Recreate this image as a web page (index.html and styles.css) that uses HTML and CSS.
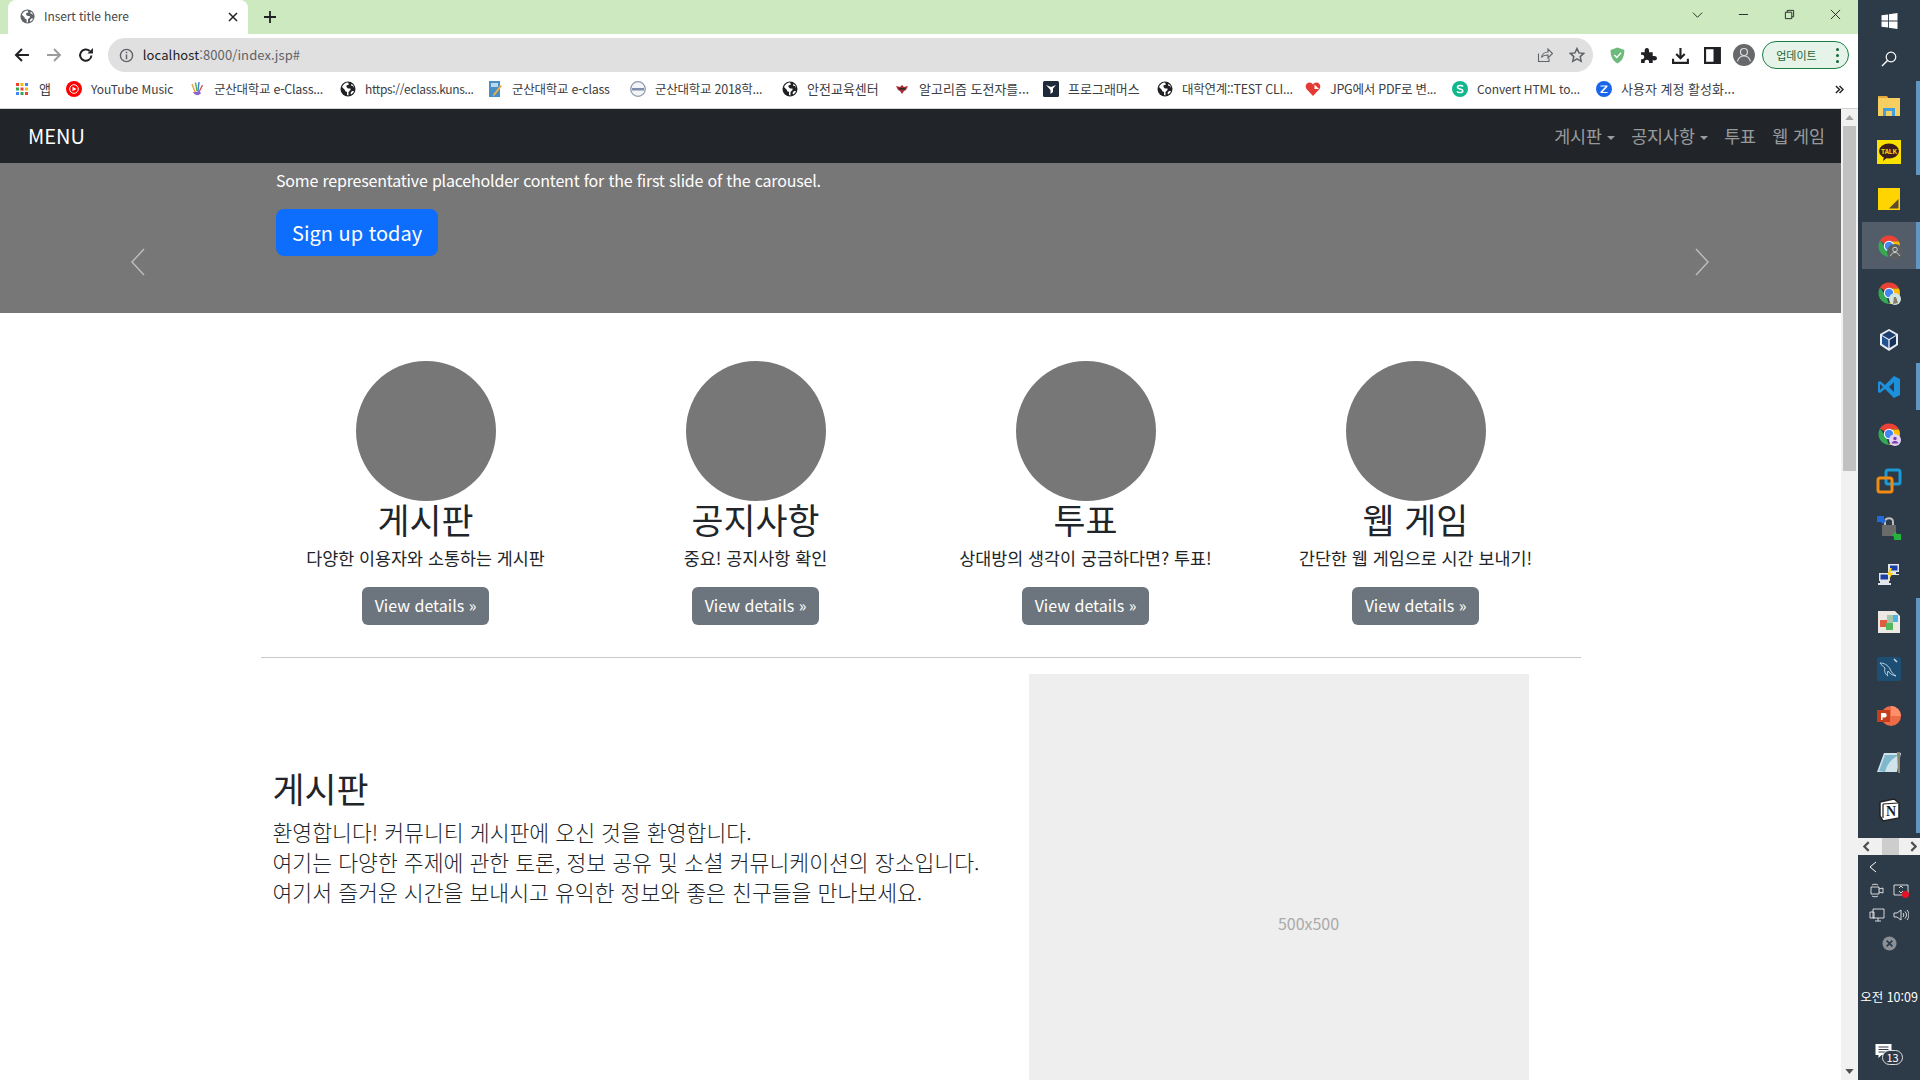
FILE: index.html
```html
<!DOCTYPE html>
<html lang="ko">
<head>
    <meta charset="UTF-8">
    <meta name="viewport" content="width=device-width, initial-scale=1.0">
    <title>Insert title here</title>
    <link rel="stylesheet" href="styles.css">
</head>
<body>
    <svg class="defs" width="0" height="0">
        <symbol id="globe" viewBox="0 0 16 16">
            <circle cx="8" cy="8" r="7.5" fill="currentColor"/>
            <path d="M2 6l3 3v1l2 1v3l1.5.5V11l2-2V7.500H8L6.500 6V4.500L9 3.500 8 1.500C5.500 1.500 3 3.500 2 6zM11 3l.5 2H13l1 2c0-2-1-3.500-3-4zM12 10l-1.500 2 .5 1.500c1.500-1 2.500-2 3-3.500z" fill="#fff"/>
        </symbol>
        <symbol id="chrome" viewBox="0 0 24 24">
            <path d="M12 12L2.900 6.500A11 11 0 0 1 22 7.500H12z" fill="#ea4335"/>
            <path d="M12 23A11 11 0 0 1 2.900 6.500L9 15z" fill="#34a853"/>
            <path d="M12 7.500h10A11 11 0 0 1 12 23l4-8z" fill="#fbbc04"/>
            <circle cx="12" cy="12" r="5.200" fill="#fff"/>
            <circle cx="12" cy="12" r="4.200" fill="#4285f4"/>
        </symbol>
    </svg>
    <div class="screen">
        <div class="window">
            <div class="tabstrip">
                <div class="tab">
                    <svg class="tab-icon"><use href="#globe"/></svg>
                    <span class="tab-title">Insert title here</span>
                    <svg class="tab-close" viewBox="0 0 10 10"><path d="M1 1l8 8M9 1l-8 8" stroke="#202124" stroke-width="1.500"/></svg>
                </div>
                <svg class="new-tab" viewBox="0 0 12 12"><path d="M6 0v12M0 6h12" stroke="#202124" stroke-width="1.800"/></svg>
                <div class="window-btns">
                    <svg viewBox="0 0 12 12"><path d="M1 4l5 5 5-5" fill="none" stroke="#222" stroke-width="1"/></svg>
                    <svg viewBox="0 0 12 12"><path d="M1 6h10" stroke="#222" stroke-width="1"/></svg>
                    <svg viewBox="0 0 12 12"><path d="M1.500 3.500h7v7h-7zM3.500 3.500v-2h7v7h-2" fill="none" stroke="#222" stroke-width="1"/></svg>
                    <svg viewBox="0 0 12 12"><path d="M1 1l10 10M11 1L1 11" stroke="#222" stroke-width="1"/></svg>
                </div>
            </div>
            <div class="toolbar">
                <svg class="nav-icon" viewBox="0 0 16 16"><path d="M15 8H2M8 2L2 8l6 6" fill="none" stroke="#202124" stroke-width="2"/></svg>
                <svg class="nav-icon" viewBox="0 0 16 16"><path d="M1 8h13M8 2l6 6-6 6" fill="none" stroke="#9a9c9e" stroke-width="2"/></svg>
                <svg class="nav-icon" viewBox="0 0 16 16"><path d="M13.500 8.500A5.700 5.700 0 1 1 11.800 4" fill="none" stroke="#202124" stroke-width="2"/><path d="M9.500 6.500H15V1z" fill="#202124"/></svg>
                <div class="omnibox">
                    <svg class="info-icon" viewBox="0 0 16 16"><circle cx="8" cy="8" r="6.500" fill="none" stroke="#5f6368" stroke-width="1.500"/><path d="M8 7v5M8 4v1.600" stroke="#5f6368" stroke-width="1.600"/></svg>
                    <span class="url">localhost<span class="url-dim">:8000/index.jsp#</span></span>
                    <svg class="omni-icon" viewBox="0 0 16 16"><path d="M1.500 6.500v8h10.500v-3M4.500 10.500C5 7 8 5 11 5V2l4.500 4.500L11 11V8C8.500 8 6 8.500 4.500 10.500z" fill="none" stroke="#5f6368" stroke-width="1.100"/></svg>
                    <svg class="omni-icon" viewBox="0 0 16 16"><path d="M8 1.500l2 4.400 4.700.5-3.500 3.200 1 4.700L8 11.900l-4.200 2.400 1-4.700-3.500-3.200 4.700-.5z" fill="none" stroke="#5f6368" stroke-width="1.500"/></svg>
                </div>
                <svg class="ext-icon" viewBox="0 0 16 16"><path d="M8 .5l6.500 2.300c0 5.500-1.500 10-6.500 12.700C3 12.800 1.500 8.300 1.500 2.800z" fill="#6cbb7d"/><path d="M5 7.500l2.300 2.300L11.500 5.500" fill="none" stroke="#fff" stroke-width="1.300"/></svg>
                <svg class="ext-icon" viewBox="0 0 16 16"><path d="M1 5h3.500C4 2 5 1 6.500 1S9 2.500 8.500 5H12v3.500c3-.5 4 .5 4 2s-1 2.500-4 2V15H8.500c.5-2-.5-3-2-3s-2.500 1-2 3H1v-3.500c2 .5 3-.5 3-2s-1-2.500-3-2z" fill="#202124"/></svg>
                <svg class="ext-icon" viewBox="0 0 16 16"><path d="M8 1v9M4 6.500l4 4 4-4M1 11v4h14v-4" fill="none" stroke="#202124" stroke-width="2"/></svg>
                <svg class="ext-icon" viewBox="0 0 16 16"><path d="M1 1h14v14H1z" fill="none" stroke="#202124" stroke-width="2"/><path d="M9 1h6v14H9z" fill="#202124"/></svg>
                <svg class="avatar" viewBox="0 0 22 22"><circle cx="11" cy="11" r="11" fill="#66686b"/><circle cx="11" cy="8" r="3.500" fill="none" stroke="#ddd" stroke-width="1.200"/><path d="M4.500 17.500c1-4 3-5.500 6.500-5.500s5.500 1.500 6.500 5.500" fill="none" stroke="#ddd" stroke-width="1.200"/></svg>
                <div class="update-pill">
                    <span class="update-text">업데이트</span>
                    <span class="update-dots"><i></i><i></i><i></i></span>
                </div>
            </div>
            <div class="bookmarks">
                <div class="bookmark bm-ko">
                    <svg class="bm-icon" viewBox="0 0 16 16">
                        <path d="M2 2h3v3H2z" fill="#ea4335"/><path d="M6.500 2h3v3h-3z" fill="#fbbc04"/><path d="M11 2h3v3h-3z" fill="#4285f4"/>
                        <path d="M2 6.500h3v3H2z" fill="#34a853"/><path d="M6.500 6.500h3v3h-3z" fill="#ea4335"/><path d="M11 6.500h3v3h-3z" fill="#fbbc04"/>
                        <path d="M2 11h3v3H2z" fill="#4285f4"/><path d="M6.500 11h3v3h-3z" fill="#34a853"/><path d="M11 11h3v3h-3z" fill="#ea4335"/>
                    </svg>
                    <span>앱</span>
                </div>
                <div class="bookmark">
                    <svg class="bm-icon" viewBox="0 0 16 16"><circle cx="8" cy="8" r="8" fill="#f00"/><circle cx="8" cy="8" r="4.300" fill="none" stroke="#fff"/><path d="M6.500 5.800L10.500 8l-4 2.200z" fill="#fff"/></svg>
                    <span>YouTube Music</span>
                </div>
                <div class="bookmark bm-mix">
                    <svg class="bm-icon" viewBox="0 0 16 16"><path d="M3 3l3 8" stroke="#e8a33a" stroke-width="1.400"/><path d="M6.500 1.500L8 10" stroke="#4caf50" stroke-width="1.400"/><path d="M10 1l-1 9" stroke="#3f7fd6" stroke-width="1.400"/><path d="M13.500 4L10 11" stroke="#d9534f" stroke-width="1.400"/><path d="M4 11c2 4 6 4 8 1l-2-2-4 1z" fill="#8a63d2"/></svg>
                    <span>군산대학교 e-Class...</span>
                </div>
                <div class="bookmark bm-url">
                    <svg class="bm-icon bm-globe"><use href="#globe"/></svg>
                    <span>https://eclass.kuns...</span>
                </div>
                <div class="bookmark bm-mix">
                    <svg class="bm-icon" viewBox="0 0 16 16"><path d="M2 0h11v16H2z" fill="#4a90c8"/><path d="M4 2h7v4H4z" fill="#bcd9ee"/><path d="M15 5L8 14l-2 1.500.5-2.500 7-9z" fill="#f2b33d"/></svg>
                    <span>군산대학교 e-class</span>
                </div>
                <div class="bookmark bm-mix">
                    <svg class="bm-icon" viewBox="0 0 16 16"><circle cx="8" cy="8" r="7.300" fill="#f2f4f8" stroke="#8d99ad" stroke-width="1.300"/><path d="M2 7h12v2.500H2z" fill="#7f8cab"/></svg>
                    <span>군산대학교 2018학...</span>
                </div>
                <div class="bookmark bm-ko">
                    <svg class="bm-icon bm-globe"><use href="#globe"/></svg>
                    <span>안전교육센터</span>
                </div>
                <div class="bookmark bm-ko">
                    <svg class="bm-icon" viewBox="0 0 16 16"><path d="M2 5l4 1 2-2 2 2 4-1-2 4-2 1-2 3-2-3-2-1z" fill="#a32c32"/><path d="M5 7h6v1.500H5z" fill="#2a2a2a"/></svg>
                    <span>알고리즘 도전자를...</span>
                </div>
                <div class="bookmark bm-ko">
                    <svg class="bm-icon" viewBox="0 0 16 16"><rect width="16" height="16" rx="1.500" fill="#1e2a3a"/><path d="M3 4l5 2 5-2-3 3.500V11l-2.500 2V9z" fill="#fff"/></svg>
                    <span>프로그래머스</span>
                </div>
                <div class="bookmark bm-mix">
                    <svg class="bm-icon bm-globe"><use href="#globe"/></svg>
                    <span>대학연계::TEST CLI...</span>
                </div>
                <div class="bookmark bm-mix">
                    <svg class="bm-icon" viewBox="0 0 16 16"><path d="M8 15L1.500 8C-.5 5 1.500 1.500 4.500 1.500 6 1.500 7.300 2.300 8 3.500 8.700 2.300 10 1.500 11.500 1.500c3 0 5 3.500 3 6.500z" fill="#e53935"/><path d="M9.500 3.500L14 8H9.500z" fill="#fff"/></svg>
                    <span>JPG에서 PDF로 변...</span>
                </div>
                <div class="bookmark">
                    <svg class="bm-icon" viewBox="0 0 16 16"><circle cx="8" cy="8" r="8" fill="#10b68c"/><path d="M11 5.500C10 4 5.500 4 5.500 6.300 5.500 8.500 10.800 7.500 10.800 10 10.800 12 6 12 5 10.300" fill="none" stroke="#fff" stroke-width="1.600"/></svg>
                    <span>Convert HTML to...</span>
                </div>
                <div class="bookmark bm-ko">
                    <svg class="bm-icon" viewBox="0 0 16 16"><circle cx="8" cy="8" r="8" fill="#1a66e8"/><path d="M4.500 4.500h7v1.300L6.500 11h5v1h-7v-1.300l5-5.200h-5z" fill="#fff"/></svg>
                    <span>사용자 계정 활성화...</span>
                </div>
                <svg class="bm-more" viewBox="0 0 10 10"><path d="M1 1l4 4-4 4M5 1l4 4-4 4" fill="none" stroke="#202124" stroke-width="1.600"/></svg>
            </div>
            <div class="viewport">
                <div class="page">
                    <nav class="navbar">
                        <a class="brand">MENU</a>
                        <ul class="nav-links">
                            <li class="nav-caret">게시판</li>
                            <li class="nav-caret">공지사항</li>
                            <li>투표</li>
                            <li>웹 게임</li>
                        </ul>
                    </nav>
                    <section class="carousel">
                        <div class="caption">
                            <p>Some representative placeholder content for the first slide of the carousel.</p>
                            <a class="btn btn-lg">Sign up today</a>
                        </div>
                        <svg class="carousel-arrow arrow-prev" viewBox="0 0 16 32"><path d="M14 3L2 16l12 13" fill="none" stroke="#fff" stroke-width="1.500"/></svg>
                        <svg class="carousel-arrow arrow-next" viewBox="0 0 16 32"><path d="M2 3l12 13L2 29" fill="none" stroke="#fff" stroke-width="1.500"/></svg>
                    </section>
                    <main class="container">
                        <div class="marketing">
                            <div class="col">
                                <div class="circle"></div>
                                <h2>게시판</h2>
                                <p>다양한 이용자와 소통하는 게시판</p>
                                <a class="btn btn-details">View details »</a>
                            </div>
                            <div class="col">
                                <div class="circle"></div>
                                <h2>공지사항</h2>
                                <p>중요! 공지사항 확인</p>
                                <a class="btn btn-details">View details »</a>
                            </div>
                            <div class="col">
                                <div class="circle"></div>
                                <h2>투표</h2>
                                <p>상대방의 생각이 궁금하다면? 투표!</p>
                                <a class="btn btn-details">View details »</a>
                            </div>
                            <div class="col">
                                <div class="circle"></div>
                                <h2>웹 게임</h2>
                                <p>간단한 웹 게임으로 시간 보내기!</p>
                                <a class="btn btn-details">View details »</a>
                            </div>
                        </div>
                        <hr class="divider">
                        <div class="featurette">
                            <div class="feature-text">
                                <h2>게시판</h2>
                                <p class="lead">환영합니다! 커뮤니티 게시판에 오신 것을 환영합니다.<br>여기는 다양한 주제에 관한 토론, 정보 공유 및 소셜 커뮤니케이션의 장소입니다.<br>여기서 즐거운 시간을 보내시고 유익한 정보와 좋은 친구들을 만나보세요.</p>
                            </div>
                            <div class="placeholder">500x500</div>
                        </div>
                    </main>
                </div>
                <div class="scrollbar">
                    <svg class="scroll-arrow" viewBox="0 0 10 6"><path d="M5 0l5 6H0z" fill="#a3a3a3"/></svg>
                    <div class="scroll-thumb"></div>
                    <svg class="scroll-arrow scroll-arrow-down" viewBox="0 0 10 6"><path d="M5 6L0 0h10z" fill="#505050"/></svg>
                </div>
            </div>
        </div>
        <aside class="taskbar">
            <svg class="win-logo" viewBox="0 0 16 16"><path d="M0 2.300l6.500-.9v6.200H0zM7.400 1.300L16 0v7.600H7.400zM0 8.400h6.500v6.200L0 13.700zM7.400 8.400H16V16l-8.600-1.300z" fill="#fff"/></svg>
            <svg class="search-logo" viewBox="0 0 16 16"><circle cx="10" cy="6" r="4.800" fill="none" stroke="#fff" stroke-width="1.200"/><path d="M6.500 9.500L1 15" stroke="#fff" stroke-width="1.400"/></svg>
            <div class="task-icons">
                <div class="task open"><svg viewBox="0 0 24 24"><path d="M1 3h9l2 3H1z" fill="#e8a73a"/><path d="M1 5h22v18H1z" fill="#f6cf60"/><path d="M6 15h12v8h-3v-5H9v5H6z" fill="#3f9de0"/></svg></div>
                <div class="task open"><svg viewBox="0 0 24 24"><path d="M0 0h24v24H0z" fill="#fae100"/><ellipse cx="12" cy="11" rx="10" ry="7.500" fill="#3c1e1e"/><path d="M7 16l-1 5 5-4z" fill="#3c1e1e"/><text x="12" y="13.500" class="talk-label">TALK</text></svg></div>
                <div class="task"><svg viewBox="0 0 24 24"><path d="M1 1h22v22H1z" fill="#ffd400"/><path d="M21.500 12v9.500H12z" fill="#5a4c30"/></svg></div>
                <div class="task open task-active"><svg viewBox="0 0 24 24"><use href="#chrome"/><circle cx="18" cy="18" r="8" fill="#5c5f62"/><circle cx="18" cy="15.500" r="2.300" fill="none" stroke="#ddd" stroke-width=".9"/><path d="M13.500 22c.8-2.500 2.500-3.500 4.500-3.500s3.700 1 4.500 3.500" fill="none" stroke="#ddd" stroke-width=".9"/></svg></div>
                <div class="task"><svg viewBox="0 0 24 24"><use href="#chrome"/><circle cx="18" cy="18" r="6" fill="#cfe5e0"/><path d="M16 23l1-7 2 0 2 6z" fill="#8a7a68"/></svg></div>
                <div class="task"><svg viewBox="0 0 24 24"><path d="M12 1l9 5v11l-9 6-9-6V6z" fill="#e8edf2"/><path d="M12 3l7 4-7 4-7-4z" fill="#1c3f70"/><path d="M5 8l6.300 4v8L5 16z" fill="#24528f"/><path d="M19 8l-6.300 4v8l6.300-4z" fill="#16325c"/></svg></div>
                <div class="task open"><svg viewBox="0 0 24 24"><path d="M17 1l6 3v16l-6 3-9-9-5 4-2-1V7l2-1 5 4z" fill="#1d8fdb"/><path d="M17 7l-5 5 5 5z" fill="#2d3a48"/><path d="M3 9v6l3-3z" fill="#2d3a48"/></svg></div>
                <div class="task"><svg viewBox="0 0 24 24"><use href="#chrome"/><circle cx="18" cy="18" r="6" fill="#e3d4f3"/><circle cx="18" cy="16.500" r="1.700" fill="#7b3fb0"/><path d="M14.500 21.500c.7-2 2-2.500 3.500-2.500s2.800.5 3.500 2.500z" fill="#7b3fb0"/></svg></div>
                <div class="task"><svg viewBox="0 0 24 24"><rect x="9" y="1" width="14" height="14" rx="2" fill="none" stroke="#1b9ad6" stroke-width="3"/><rect x="1" y="9" width="14" height="14" rx="2" fill="none" stroke="#f08a11" stroke-width="3"/></svg></div>
                <div class="task"><svg viewBox="0 0 24 24"><path d="M8 10V6c0-5 8-5 8 0v4" fill="none" stroke="#bdbdbd" stroke-width="2"/><path d="M5 9h14v11H5z" fill="#6a6a6a"/><path d="M0 0h7v3l2 2-3 3-2-2-4 0z" fill="#2168d8"/><path d="M24 24h-7v-3l-2-2 3-3 2 2h4z" fill="#25b33e"/></svg></div>
                <div class="task"><svg viewBox="0 0 24 24"><path d="M11 1h11v8h-3v2h3v1H13V9h-2z" fill="#e2e6ea"/><path d="M13 2.500h7.500v5H13z" fill="#1a3fa8"/><path d="M2 10h11v8h-1v2h2v2H1v-2h2v-2H2z" fill="#e2e6ea"/><path d="M3.500 11.500H11v5H3.500z" fill="#1a3fa8"/><path d="M13 5l-3 7h3l-2 6 5-8h-3l2-5z" fill="#ffd400"/></svg></div>
                <div class="task open"><svg viewBox="0 0 24 24"><path d="M1 1h17l5 5v17H1z" fill="#ece9e4"/><path d="M3 10h7v7H3z" fill="#e55b41"/><path d="M10 5h6v8h-6z" fill="#a5c6a8"/><path d="M16 5h5v7h-5z" fill="#4db0e6"/><path d="M9 13h7v7H9z" fill="#52b95a"/></svg></div>
                <div class="task open"><svg viewBox="0 0 24 24"><rect width="24" height="24" rx="2" fill="#1d4e74"/><path d="M3 6c4 0 8 2 10 6 1 3 3 5 6 7-4-1-6-2-8-5-1 3-1 4 0 5-3-2-4-5-3-8-2-2-4-3-5-5z" fill="none" stroke="#c7dcea" stroke-width=".9"/><path d="M17 2l3 3" stroke="#c7dcea" stroke-width="1.500"/></svg></div>
                <div class="task open"><svg viewBox="0 0 24 24"><circle cx="14" cy="12" r="10" fill="#ed6c47"/><path d="M14 2a10 10 0 0 1 10 10H14z" fill="#ff8f6b"/><path d="M0 6h13v12H0z" fill="#c43e1c"/><path d="M4 9h3.500a2.200 2.200 0 0 1 0 4.500H5.500V16H4z" fill="#fff"/></svg></div>
                <div class="task open"><svg viewBox="0 0 24 24"><path d="M7 2h17l-4 19-20 0z" fill="#cfe3ea"/><path d="M2 20L8 4l14 0c-7 3-12 9-14 17z" fill="#7fb7cc"/><path d="M20 1h3v21h-2z" fill="#8c8571"/></svg></div>
                <div class="task open"><svg viewBox="0 0 24 24"><path d="M3 4l14-3 5 4v15l-16 3-3-5z" fill="#fff" stroke="#222" stroke-width="1.500"/><path d="M6 6l15-1M6 6v14" stroke="#222" stroke-width="1.200"/><text x="14" y="18" class="notion-label">N</text></svg></div>
            </div>
            <div class="task-scroll">
                <svg viewBox="0 0 6 10"><path d="M5 1L1 5l4 4" fill="none" stroke="#505050" stroke-width="2"/></svg>
                <span class="task-thumb"></span>
                <svg viewBox="0 0 6 10"><path d="M1 1l4 4-4 4" fill="none" stroke="#505050" stroke-width="2"/></svg>
            </div>
            <div class="tray">
                <svg class="tray-chevron" viewBox="0 0 8 12"><path d="M7 1L1 6l6 5" fill="none" stroke="#fff" stroke-width="1"/></svg>
                <div class="tray-row">
                    <svg viewBox="0 0 16 16"><path d="M2 5h8v7H2zM10 7l4-1v5l-4-1M3 3c1-1 5-1 6 0M3 14c1 1 5 1 6 0" fill="none" stroke="#fff" stroke-width=".8"/></svg>
                    <svg viewBox="0 0 16 16"><path d="M1 3h14v10H1z" fill="none" stroke="#fff" stroke-width=".8"/><path d="M6 6l2-2 2 2M10 9l-2 2-2-2" fill="none" stroke="#fff" stroke-width=".8"/><circle cx="12.500" cy="12.500" r="3.500" fill="#e81123"/></svg>
                </div>
                <div class="tray-row">
                    <svg viewBox="0 0 16 16"><path d="M4 2h11v9H4zM1 5h4v6H1zM9 11v3M6 14h6" fill="none" stroke="#fff" stroke-width=".8"/></svg>
                    <svg viewBox="0 0 16 16"><path d="M1 6h3l4-3v10l-4-3H1zM10 6c1 1 1 3 0 4M12 4.500c2 2 2 5 0 7M14 3c2.500 3 2.500 7 0 10" fill="none" stroke="#fff" stroke-width=".8"/></svg>
                </div>
                <svg class="tray-x" viewBox="0 0 16 16"><circle cx="8" cy="8" r="7.500" fill="#8b9096"/><path d="M5 5l6 6M11 5l-6 6" stroke="#2d3a48" stroke-width="1.800"/></svg>
                <div class="clock">오전 10:09</div>
                <div class="notify">
                    <svg viewBox="0 0 16 14"><path d="M0 0h16v11H6l-3 3v-3H0z" fill="#fff"/><path d="M3 3h10M3 5.500h10M3 8h7" stroke="#2d3a48"/></svg>
                    <span class="notify-badge">13</span>
                </div>
            </div>
        </aside>
    </div>
</body>
</html>
```

FILE: styles.css
```css
* {
    box-sizing: border-box;
}
html, body {
    margin: 0;
    height: 100%;
    overflow: hidden;
}
body {
    font-family: "Noto Sans CJK KR", sans-serif;
    font-size: 16px;
    line-height: 1.5;
    color: #212529;
    background-color: #fff;
}
.defs {
    position: absolute;
}
.screen {
    display: flex;
    height: 1080px;
}
.window {
    flex: 1;
    min-width: 0;
    display: flex;
    flex-direction: column;
}

/* browser chrome */
.tabstrip {
    height: 34px;
    flex: none;
    background-color: #cce9c0;
    display: flex;
    align-items: flex-end;
    padding-left: 8px;
}
.tab {
    width: 240px;
    height: 34px;
    background-color: #fff;
    border-radius: 8px 8px 0 0;
    display: flex;
    align-items: center;
    padding: 0 10px 1px 12px;
    color: #45484c;
}
.tab-icon {
    width: 15px;
    height: 15px;
    color: #5f6368;
    margin-right: 9px;
}
.tab-title {
    flex: 1;
    font-size: 12px;
    letter-spacing: -.1px;
    padding-bottom: 1px;
}
.tab-close {
    width: 10px;
    height: 10px;
}
.new-tab {
    width: 12px;
    height: 12px;
    margin: 0 0 11px 16px;
}
.window-btns {
    margin-left: auto;
    height: 34px;
    display: flex;
    align-items: center;
    gap: 35px;
    padding: 0 17px 5px 0;
}
.window-btns svg {
    width: 11px;
    height: 11px;
}
.toolbar {
    height: 42px;
    flex: none;
    display: flex;
    align-items: center;
    padding: 4px 9px 4px 14px;
    background-color: #fff;
}
.nav-icon {
    width: 16px;
    height: 16px;
    margin-right: 16px;
}
.omnibox {
    width: 1490px;
    height: 34px;
    margin-left: -2px;
    border-radius: 17px;
    background-color: #e0e0e0;
    display: flex;
    align-items: center;
    padding: 0 8px 0 11px;
}
.info-icon {
    width: 15px;
    height: 15px;
    margin-right: 9px;
}
.url {
    flex: 1;
    font-size: 13px;
    letter-spacing: .1px;
    color: #202124;
}
.url-dim {
    color: #5f6368;
}
.omni-icon {
    width: 16px;
    height: 16px;
    margin-left: 16px;
}
.ext-icon {
    width: 17px;
    height: 17px;
    margin-left: 15px;
}
.omnibox + .ext-icon {
    margin-left: 16px;
}
.avatar {
    width: 22px;
    height: 22px;
    margin-left: 12px;
}
.update-pill {
    width: 87px;
    height: 28px;
    margin-left: 7px;
    border: 1px solid #1a7f42;
    border-radius: 14px;
    background-color: #e6f3e9;
    display: flex;
    align-items: center;
    padding: 0 9px 0 13px;
}
.update-text {
    flex: 1;
    font-size: 11px;
    color: #18663a;
}
.update-dots {
    display: flex;
    flex-direction: column;
    gap: 3px;
}
.update-dots i {
    width: 3px;
    height: 3px;
    border-radius: 50%;
    background-color: #18663a;
}
.bookmarks {
    height: 33px;
    flex: none;
    display: grid;
    grid-template-columns: 52px 123px 151px 147px 143px 152px 112px 149px 114px 148px 147px 144px 239px 14px;
    align-items: center;
    padding: 0 0 6px 14px;
    background-color: #fff;
    border-bottom: 1px solid #d3d3d3;
    font-size: 12px;
    letter-spacing: -.1px;
    color: #3c4043;
}
.bm-ko {
    font-size: 13px;
    letter-spacing: 0;
}
.bm-mix {
    font-size: 12.500px;
    letter-spacing: -.25px;
}
.bm-url {
    letter-spacing: -.35px;
}
.bookmark {
    display: flex;
    align-items: center;
    gap: 9px;
    white-space: nowrap;
}
.bm-icon {
    width: 16px;
    height: 16px;
    flex: none;
}
.bm-globe {
    color: #202124;
}
.bm-more {
    width: 9px;
    height: 9px;
}

/* page */
.viewport {
    flex: 1;
    min-height: 0;
    display: flex;
}
.page {
    flex: 1;
    min-width: 0;
    overflow: hidden;
}
.navbar {
    height: 54px;
    background-color: #212529;
    display: flex;
    align-items: center;
    justify-content: space-between;
    padding: 0 16px 0 28px;
}
.brand {
    font-size: 20px;
    color: #fff;
}
.nav-links {
    display: flex;
    gap: 16px;
    margin: 0;
    padding: 0;
    list-style: none;
    font-size: 17.400px;
    color: rgba(255,255,255,.55);
}
.nav-caret::after {
    content: "";
    display: inline-block;
    margin-left: 5px;
    vertical-align: 3px;
    border-top: 4px solid;
    border-left: 4px solid transparent;
    border-right: 4px solid transparent;
}
.carousel {
    position: relative;
    height: 150px;
    background-color: #777;
    color: #fff;
}
.caption {
    width: 1320px;
    margin: 0 auto;
    padding: 5px 0 0 15.500px;
}
.caption p {
    margin: 0 0 17px;
    letter-spacing: -.19px;
}
.carousel-arrow {
    position: absolute;
    top: 83px;
    width: 16px;
    height: 32px;
    opacity: .5;
}
.arrow-prev {
    left: 130px;
}
.arrow-next {
    right: 131px;
}
.btn {
    display: inline-block;
    color: #fff;
    text-align: center;
}
.btn-lg {
    padding: 8.500px 16px;
    font-size: 20px;
    line-height: 30px;
    border-radius: 8px;
    background-color: #0d6efd;
}
.btn-details {
    padding: 7px 13px 7px;
    line-height: 23px;
    height: 38px;
    border-radius: 6px;
    background-color: #6c757d;
}
.container {
    width: 1320px;
    margin: 0 auto;
}
.marketing {
    display: grid;
    grid-template-columns: repeat(4, 1fr);
    padding-top: 48px;
}
.col {
    display: flex;
    flex-direction: column;
    align-items: center;
    padding: 0 12px;
    text-align: center;
}
.circle {
    width: 140px;
    height: 140px;
    border-radius: 50%;
    background-color: #777;
}
h2 {
    margin: 0 0 8px;
    font-size: 34.800px;
    font-weight: 400;
    line-height: 38.400px;
}
.col h2 {
    margin: -1px 0 8px;
}
.col p {
    margin: 0 0 17px;
    font-size: 17.400px;
    line-height: 24px;
}
.divider {
    margin: 32px 0 16px;
    border: 0;
    border-top: 1px solid #c8c9ca;
}
.featurette {
    display: flex;
    padding-left: 12px;
}
.feature-text {
    width: 756px;
    padding-top: 95px;
}
.feature-text h2 {
    margin-bottom: 9px;
}
.lead {
    margin: 0;
    font-size: 21.600px;
    font-weight: 300;
    line-height: 30px;
}
.placeholder {
    width: 500px;
    height: 500px;
    flex: none;
    background-color: #eee;
    color: #aaa;
    display: flex;
    align-items: center;
    justify-content: center;
    padding: 0 0 2px 60px;
}
.scrollbar {
    width: 17px;
    flex: none;
    background-color: #f1f1f1;
    display: flex;
    flex-direction: column;
    align-items: center;
}
.scroll-arrow {
    width: 9px;
    height: 5px;
    margin: 6px 0;
    flex: none;
}
.scroll-thumb {
    width: 13px;
    height: 345px;
    background-color: #c1c1c1;
}
.scroll-arrow-down {
    margin-top: auto;
}

/* taskbar */
.taskbar {
    width: 62px;
    flex: none;
    background-color: #2d3a48;
    display: flex;
    flex-direction: column;
    align-items: center;
    color: #fff;
}
.win-logo {
    width: 17px;
    height: 16px;
    margin-top: 13px;
}
.search-logo {
    width: 16px;
    height: 16px;
    margin: 22px 0 0;
}
.task-icons {
    width: 100%;
    margin-top: 14px;
    display: flex;
    flex-direction: column;
}
.task {
    height: 47px;
    display: flex;
    align-items: center;
    justify-content: center;
    padding-left: 0;
}
.task svg {
    width: 24px;
    height: 24px;
    overflow: visible;
}
.task.open {
    border-right: 4px solid #5f96c4;
    padding-left: 4px;
}
.task-active {
    background-color: #525d69;
    margin-left: 4px;
}
.task.task-active {
    padding-left: 0;
}
.talk-label {
    font-size: 6.500px;
    font-weight: 700;
    fill: #fae100;
    text-anchor: middle;
}
.notion-label {
    font-family: "Liberation Serif", serif;
    font-size: 14px;
    font-weight: 700;
    fill: #222;
    text-anchor: middle;
}
.task-scroll {
    width: 100%;
    height: 17px;
    margin-top: 5px;
    flex: none;
    background-color: #f0f0f0;
    display: flex;
    align-items: center;
    justify-content: space-between;
    padding: 0 3px 0 5px;
}
.task-scroll svg {
    width: 7px;
    height: 11px;
}
.task-thumb {
    width: 17px;
    height: 17px;
    background-color: #cdcdcd;
}
.tray {
    width: 100%;
    flex: 1;
    display: flex;
    flex-direction: column;
    align-items: center;
}
.tray-chevron {
    width: 8px;
    height: 12px;
    margin: 6px 32px 0 0;
}
.tray-row {
    display: flex;
    gap: 8px;
    margin-top: 9px;
}
.tray-x {
    width: 15px;
    height: 15px;
    margin-top: 13px;
}
.tray-row svg {
    width: 16px;
    height: 16px;
}
.clock {
    margin-top: 38px;
    font-size: 12.500px;
    line-height: 16px;
    white-space: nowrap;
}
.notify {
    position: relative;
    margin-top: 39px;
    width: 28px;
    height: 22px;
}
.notify svg {
    width: 17px;
    height: 14px;
    position: absolute;
    left: 0;
    top: 0;
}
.notify-badge {
    position: absolute;
    left: 7px;
    top: 6px;
    width: 21px;
    height: 15px;
    border: 1px solid #ddd;
    border-radius: 8px;
    background-color: #2d3a48;
    font-size: 11px;
    line-height: 13px;
    text-align: center;
}
```
